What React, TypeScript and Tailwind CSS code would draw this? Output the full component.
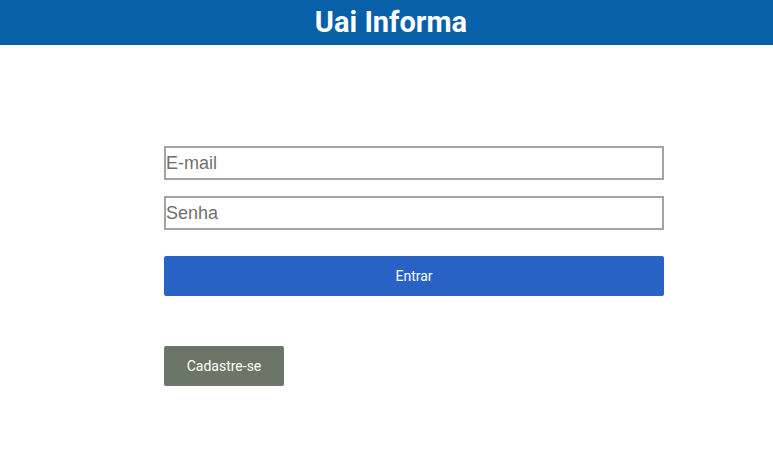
import React from 'react';

const App = () => {
  return (
    <div className="min-h-[472px] bg-white">
      <header className="h-[45px] bg-[#0860a8] flex items-center justify-center pl-[9px]">
        <h1 className="text-white text-[29px] font-bold font-['Roboto',sans-serif] leading-none">Uai Informa</h1>
      </header>

      <div className="w-[500px] ml-[164px] pt-[101px]">
        <form className="flex flex-col">
          <input
            type="email"
            placeholder="E-mail"
            className="h-[34px] border-2 border-[#a3a3a3] px-0 text-[18px] font-['Liberation_Sans',Arial,sans-serif] placeholder:text-[#6f6f6f] outline-none"
          />
          <input
            type="password"
            placeholder="Senha"
            className="mt-[16px] h-[34px] border-2 border-[#a3a3a3] px-0 text-[18px] font-['Liberation_Sans',Arial,sans-serif] placeholder:text-[#6f6f6f] outline-none"
          />
          <button
            type="button"
            className="mt-[26px] h-[40px] bg-[#2862c4] rounded-[2px] text-white text-[14px] font-['Roboto',sans-serif]"
          >
            Entrar
          </button>
        </form>

        <button
          type="button"
          className="mt-[50px] w-[120px] h-[40px] bg-[#6b7668] rounded-[2px] text-white text-[14px] font-['Roboto',sans-serif]"
        >
          Cadastre-se
        </button>
      </div>
    </div>
  );
};

export default App;
